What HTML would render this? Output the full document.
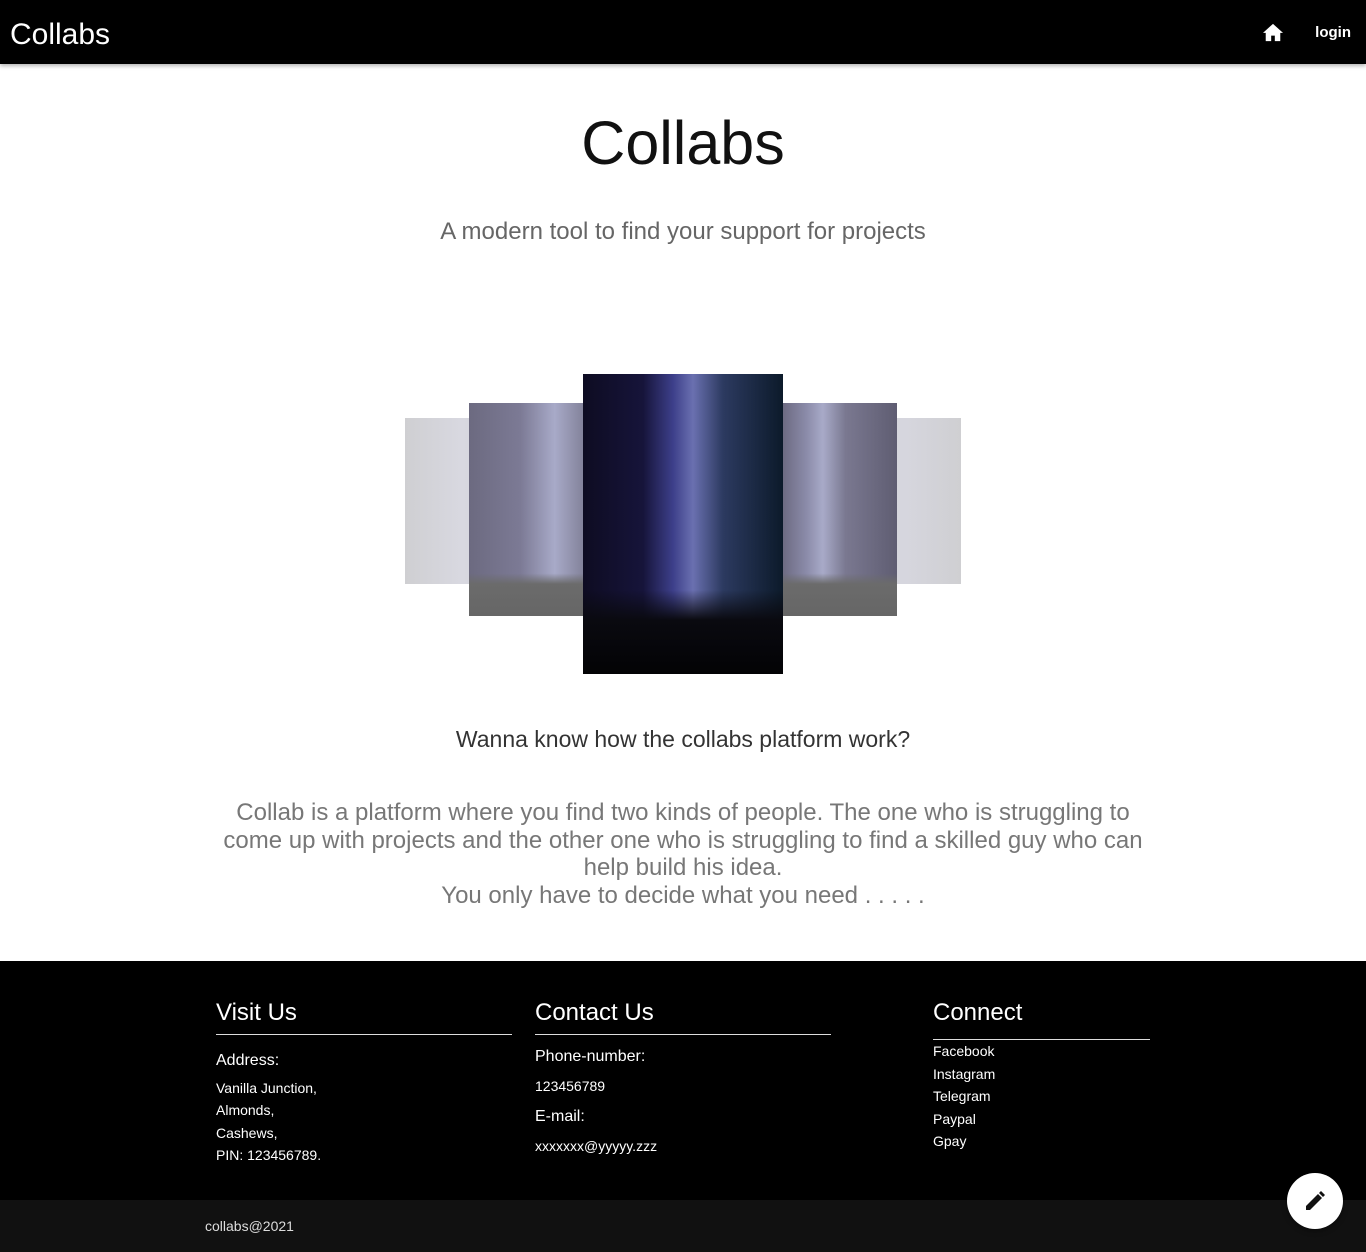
<!DOCTYPE html>
<html><head><meta charset="utf-8"><style>
*{margin:0;padding:0;box-sizing:border-box}
body{width:1366px;height:1252px;background:#fff;font-family:"Liberation Sans",sans-serif;position:relative;overflow:hidden}
.nav{position:absolute;left:0;top:0;width:1366px;height:64px;background:#000;box-shadow:0 2px 4px rgba(0,0,0,.3)}
.brand{position:absolute;left:10px;top:18px;color:#fff;font-size:30px}
.login{position:absolute;right:15px;top:24px;color:#fff;font-size:15px;font-weight:bold}
.home{position:absolute;left:1262px;top:22px}
.t{position:absolute;left:0;width:1366px;text-align:center}
.card{position:absolute}
.footer{position:absolute;left:0;top:961px;width:1366px;height:239px;background:#000;color:#fff}
.bottom{position:absolute;left:0;top:1200px;width:1366px;height:52px;background:#111;color:#ddd;font-size:14px}
.col{position:absolute}
.col h3{font-weight:normal;font-size:24px;padding-bottom:7px;border-bottom:1px solid #ddd}
.col p{font-size:14px;line-height:22.5px}
.fab{position:absolute;left:1287px;top:1173px;width:56px;height:56px;border-radius:50%;background:#fff;box-shadow:0 2px 6px rgba(0,0,0,.4)}
</style></head><body>
<div class="nav"><div class="brand">Collabs</div>
<svg class="home" width="22" height="20" viewBox="0 0 24 22"><path d="M12 2L1 12h3v9h6v-6h4v6h6v-9h3z" fill="#fff"/></svg>
<div class="login">login</div></div>
<div class="t" style="top:108px;font-size:61px;color:#111">Collabs</div>
<div class="t" style="top:218px;font-size:24px;color:#666">A modern tool to find your support for projects</div>

<div class="card" style="left:405px;top:418px;width:556px;height:166px;background:linear-gradient(90deg,#cfcfd2 0,#d8d8e0 10%,#c9c9cf 30%,#cfcfd4 70%,#d6d6de 90%,#cfcfd2 100%)"></div>
<div class="card" style="left:469px;top:403px;width:428px;height:213px;background:linear-gradient(180deg,rgba(0,0,0,0) 0,rgba(0,0,0,0) 80%,#6b6b6b 85%,#666 100%),linear-gradient(90deg,#6c6a80 0,#7c7a95 12%,#a8aac8 20%,#7c7b92 28%,#6d6b82 100%)"></div>
<div class="card" style="left:783px;top:403px;width:114px;height:213px;background:linear-gradient(180deg,rgba(0,0,0,0) 0,rgba(0,0,0,0) 80%,#6b6b6b 85%,#666 100%),linear-gradient(90deg,#6d6b82 0,#8a8aa8 20%,#a8aac8 35%,#7a7890 55%,#5f5d72 100%)"></div>
<div class="card" style="left:583px;top:374px;width:200px;height:300px;background:linear-gradient(180deg,rgba(0,0,0,0) 0,rgba(0,0,0,0) 72%,#0a0a10 82%,#030305 100%),linear-gradient(90deg,#0e0c22 0,#16143a 30%,#3d3f8a 45%,#6a70b0 55%,#2c3a60 70%,#0c1a2a 100%)"></div>

<div class="t" style="top:726px;font-size:23px;color:#333">Wanna know how the collabs platform work?</div>
<div class="t" style="top:799px;font-size:24px;color:#777;line-height:27.5px;padding:0 215px">Collab is a platform where you find two kinds of people. The one who is struggling to come up with projects and the other one who is struggling to find a skilled guy who can help build his idea.<br>You only have to decide what you need . . . . .</div>

<div class="footer">
<div class="col" style="left:216px;top:38px;width:296px"><h3>Visit Us</h3><p style="font-size:16px;margin-top:15px">Address:</p><p style="margin-top:4px">Vanilla Junction,<br>Almonds,<br>Cashews,<br>PIN: 123456789.</p></div>
<div class="col" style="left:535px;top:38px;width:296px"><h3>Contact Us</h3><p style="font-size:16px;margin-top:11px">Phone-number:</p><p style="margin-top:6px">123456789</p><p style="font-size:16px;margin-top:9px">E-mail:</p><p style="margin-top:6px">xxxxxxx@yyyyy.zzz</p></div>
<div class="col" style="left:933px;top:38px;width:217px"><h3 style="padding-bottom:12px">Connect</h3><p style="margin-top:0px">Facebook<br>Instagram<br>Telegram<br>Paypal<br>Gpay</p></div>
</div>
<div class="bottom"><span style="position:absolute;left:205px;top:18px">collabs@2021</span></div>
<div class="fab"><svg width="56" height="56" viewBox="0 0 56 56"><path d="M19 37v-4l12-12 4 4-12 12z M32 20l2-2 4 4-2 2z" fill="#111"/></svg></div>
</body></html>
